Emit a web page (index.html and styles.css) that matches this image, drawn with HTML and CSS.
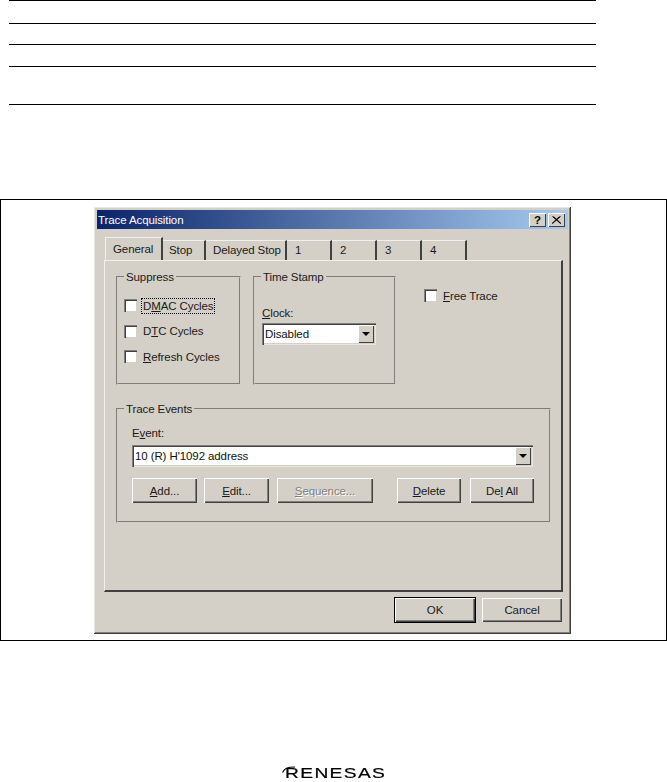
FILE: index.html
```html
<!DOCTYPE html>
<html lang="en">
<head>
  <meta charset="UTF-8" />
  <meta name="viewport" content="width=device-width, initial-scale=1" />
  <title>Trace Acquisition</title>
  <link rel="stylesheet" href="styles.css">
</head>
<body>
  <div class="rules">
    <div class="rule r1"></div>
    <div class="rule r2"></div>
    <div class="rule r3"></div>
    <div class="rule r4"></div>
  </div>

  <div class="figure">
    <div class="dialog">
      <div class="titlebar">
        <span class="title-text">Trace Acquisition</span>
        <span class="caption-btn help">?</span>
        <span class="caption-btn close">
          <svg width="9" height="8" viewBox="0 0 9 8"><path d="M0.5 0.5L8.5 7.5M8.5 0.5L0.5 7.5M1.5 0.5L9 7.5M7.5 0.5L0 7.5" stroke="#000" stroke-width="1" fill="none"/></svg>
        </span>
      </div>

      <div class="tabs">
        <div class="tab active">General</div>
        <div class="tab t-stop">Stop</div>
        <div class="tab t-delayed">Delayed Stop</div>
        <div class="tab t-num">1</div>
        <div class="tab t-num">2</div>
        <div class="tab t-num">3</div>
        <div class="tab t-num">4</div>
      </div>

      <div class="panel">
        <div class="top-row">
          <fieldset class="group suppress">
            <legend>Suppress</legend>
            <div class="group-body">
              <label class="check"><span class="box"></span><span class="focus">D<u>M</u>AC Cycles</span></label>
              <label class="check"><span class="box"></span><span>D<u>T</u>C Cycles</span></label>
              <label class="check"><span class="box"></span><span><u>R</u>efresh Cycles</span></label>
            </div>
          </fieldset>
          <fieldset class="group stamp">
            <legend>Time Stamp</legend>
            <div class="group-body">
              <div class="field-label"><u>C</u>lock:</div>
              <div class="combo clock"><span class="combo-value">Disabled</span><span class="arrow"></span></div>
            </div>
          </fieldset>
          <label class="check free"><span class="box"></span><span><u>F</u>ree Trace</span></label>
        </div>

        <fieldset class="group events">
          <legend>Trace Events</legend>
          <div class="group-body">
            <div class="field-label">E<u>v</u>ent:</div>
            <div class="combo event"><span class="combo-value">10 (R) H'1092 address</span><span class="arrow"></span></div>
            <div class="event-buttons">
              <div class="btn b-add"><span><u>A</u>dd...</span></div>
              <div class="btn b-edit"><span><u>E</u>dit...</span></div>
              <div class="btn b-seq disabled"><span><u>S</u>equence...</span></div>
              <div class="btn b-del"><span><u>D</u>elete</span></div>
              <div class="btn b-delall"><span>De<u>l</u> All</span></div>
            </div>
          </div>
        </fieldset>
      </div>

      <div class="footer">
        <div class="btn default"><span>OK</span></div>
        <div class="btn cancel"><span>Cancel</span></div>
      </div>
    </div>
  </div>

  <div class="logo">
    <svg class="logo-swoosh" width="14" height="12" viewBox="0 0 14 12"><path d="M0.5 7.5C2.5 3.5 5 2 13 2" stroke="#000" stroke-width="1.2" fill="none"/></svg>
    <span class="logo-text">RENESAS</span>
  </div>
</body>
</html>
```

FILE: styles.css
```css
html, body {
  margin: 0;
  padding: 0;
  height: 782px;
  overflow: hidden;
  background: #fff;
}
body {
  font-family: "Liberation Sans", Arial, sans-serif;
  font-size: 11.5px;
  letter-spacing: -0.1px;
  color: #1a1a1a;
}

/* table rules at the top of the page */
.rules {
  margin: 0 71px 0 9px;
  height: 105px;
  border-bottom: 1px solid #000;
  box-sizing: border-box;
}
.rule {
  border-top: 1px solid #000;
  box-sizing: border-box;
}
.r1 { height: 23px; }
.r2 { height: 21px; }
.r3 { height: 22px; }
.r4 { height: 38px; }

.figure {
  margin-top: 94px;
  height: 442px;
  border: 1px solid #000;
  box-sizing: border-box;
  padding: 7px 0 0 93px;
}

.dialog {
  width: 477px;
  height: 427px;
  box-sizing: border-box;
  background: #d4d0c8;
  padding: 3px 2px 0 3px;
  border-right: 1px solid #404040;
  border-bottom: 1px solid #404040;
  box-shadow: inset 1px 1px 0 #e8e6e0, inset -1px -1px 0 #808080;
}

.titlebar {
  height: 19px;
  display: flex;
  align-items: center;
  padding: 0 3px 0 1px;
  background: linear-gradient(to right, #0a246a, #a6caf0);
  color: #fff;
}
.title-text {
  flex: 1;
}
.caption-btn {
  width: 17px;
  height: 14px;
  margin-left: 2px;
  display: flex;
  align-items: center;
  justify-content: center;
  background: #d4d0c8;
  color: #000;
  font-weight: bold;
  box-shadow: inset 1px 1px 0 #fff, inset -1px -1px 0 #404040;
}

.tabs {
  display: flex;
  align-items: flex-end;
  height: 23px;
  margin: 8px 0 0 8px;
}
.tab {
  height: 20px;
  width: 45px;
  box-sizing: border-box;
  padding: 3px 0 0 8px;
  border-top: 1px solid #f2f0ec;
  border-right: 2px solid #404040;
  white-space: nowrap;
}
.tab.active {
  height: 23px;
  width: 58px;
  padding: 5px 0 0 7px;
  border-left: 1px solid #f2f0ec;
}
.t-stop { width: 43px; padding-left: 6px; }
.t-delayed { width: 81px; padding-left: 7px; }

.panel {
  width: 459px;
  height: 332px;
  margin-left: 7px;
  box-sizing: border-box;
  padding: 9px 0 0 11px;
  border-top: 1px solid #f2f0ec;
  border-left: 1px solid #f2f0ec;
  border-right: 2px solid #404040;
  border-bottom: 2px solid #404040;
}

.top-row {
  display: flex;
  height: 115px;
}

.group {
  margin: 0;
  padding: 0;
  box-sizing: border-box;
  border: 2px groove #d4d0c8;
  min-width: 0;
}
.group legend {
  margin-left: 6px;
  padding: 0 2px;
  line-height: 14px;
}

.suppress {
  width: 125px;
  height: 115px;
}
.suppress .group-body {
  padding: 13px 0 0 6px;
}
.stamp {
  width: 143px;
  height: 115px;
  margin-left: 12px;
}
.stamp .group-body {
  padding: 22px 0 0 7px;
}

.check {
  display: flex;
  align-items: center;
  height: 17px;
  margin-bottom: 8.5px;
}
.box {
  width: 13px;
  height: 13px;
  flex: none;
  margin-right: 6px;
  background: #fff;
  box-sizing: border-box;
  box-shadow: inset 1px 1px 0 #808080, inset 2px 2px 0 #404040, inset -1px -1px 0 #d4d0c8;
}
.focus {
  outline: 1px dotted #000;
  outline-offset: 1px;
}
.free {
  margin: 17px 0 0 28px;
}

.field-label {
  height: 14px;
  line-height: 14px;
}

.combo {
  display: flex;
  align-items: center;
  box-sizing: border-box;
  background: #fff;
  padding: 2px;
  box-shadow: inset 1px 1px 0 #808080, inset 2px 2px 0 #404040, inset -1px -1px 0 #e8e6e0, inset -2px -2px 0 #d4d0c8;
}
.combo-value {
  flex: 1;
  padding-left: 1px;
  color: #111;
}
.clock {
  width: 114px;
  height: 22px;
  margin-top: 3px;
}
.event {
  width: 401px;
  height: 22px;
  margin-top: 5px;
}
.arrow {
  width: 16px;
  height: 18px;
  flex: none;
  display: flex;
  align-items: center;
  justify-content: center;
  background: #d4d0c8;
  box-shadow: inset 1px 1px 0 #fff, inset -1px -1px 0 #404040;
}
.arrow::after {
  content: "";
  border-left: 4px solid transparent;
  border-right: 4px solid transparent;
  border-top: 4px solid #000;
}

.events {
  width: 435px;
  height: 121px;
  margin-top: 17px;
}
.events .group-body {
  padding: 10px 0 0 14px;
}
.event-buttons {
  display: flex;
  margin-top: 11px;
}

.btn {
  width: 65px;
  height: 25px;
  box-sizing: border-box;
  display: flex;
  align-items: center;
  justify-content: center;
  background: #d4d0c8;
  box-shadow: inset 1px 1px 0 #fff, inset -1px -1px 0 #404040, inset -2px -2px 0 #808080;
}
.b-edit { margin-left: 7px; }
.b-seq { width: 96px; margin-left: 8px; }
.b-del { width: 64px; margin-left: 24px; }
.b-delall { width: 64px; margin-left: 9px; }
.disabled {
  color: #808080;
  text-shadow: 1px 1px 0 #fff;
}

.footer {
  display: flex;
  justify-content: flex-end;
  gap: 7px;
  margin-top: 6px;
  padding-right: 6px;
}
.footer .btn {
  width: 80px;
  height: 24px;
}
.footer .default {
  box-shadow: 0 0 0 1px #000, inset 1px 1px 0 #fff, inset -1px -1px 0 #404040, inset -2px -2px 0 #808080;
}

.logo {
  position: relative;
  width: 104px;
  height: 14px;
  margin: 125px auto 0 282px;
  white-space: nowrap;
  font-size: 14px;
  line-height: 14px;
  letter-spacing: 1px;
  color: #000;
}
.logo-text {
  display: inline-block;
  margin-left: 3px;
  transform: scaleX(1.37);
  transform-origin: left center;
  -webkit-text-stroke: 0.2px #000;
}
/* curved stroke of the logo's R, lies over the letter */
.logo-swoosh {
  position: absolute;
  left: 0;
  top: -1px;
}
```
